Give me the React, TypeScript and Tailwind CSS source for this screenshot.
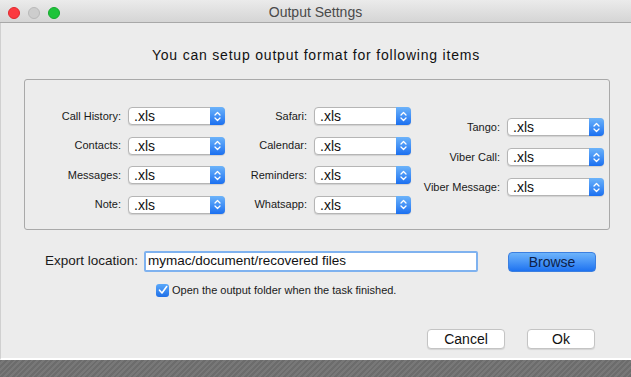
import React from "react";

const F = { fontFamily: '"Liberation Sans", Arial, sans-serif' };

function Select() {
  return (
    <div className="relative flex h-[18px] w-[97px] items-center rounded-[4px] border border-[#b5b5b5] bg-white shadow-[0_1px_1px_rgba(0,0,0,0.12)]">
      <span className="pl-[5px] text-[14px] leading-none text-[#111]">.xls</span>
      <div className="absolute right-[-1px] top-[-1px] flex h-[18px] w-[15px] items-center justify-center rounded-r-[4px] bg-gradient-to-b from-[#6cb3fa] to-[#1a6ff0]">
        <svg width="7" height="11" viewBox="0 0 7 11" fill="none" stroke="white" strokeWidth="1.3" strokeLinecap="round" strokeLinejoin="round">
          <path d="M1 4 L3.5 1.5 L6 4" />
          <path d="M1 7 L3.5 9.5 L6 7" />
        </svg>
      </div>
    </div>
  );
}

function Row({ label, lw }: { label: string; lw: string }) {
  return (
    <div className="flex h-[18px] items-center">
      <div className={`${lw} pr-[7px] text-right text-[11px] text-[#1a1a1a]`}>{label}</div>
      <Select />
    </div>
  );
}

export default function App() {
  return (
    <div className="flex h-[377px] w-[631px] flex-col overflow-hidden bg-[#ececec]" style={F}>
      <div className="relative flex h-[23px] items-center justify-center border-b border-[#a8a8a8] bg-gradient-to-b from-[#ebebeb] to-[#d5d5d5]">
        <div className="absolute left-[8px] top-[7px] flex gap-[8px]">
          <div className="h-[12px] w-[12px] rounded-full bg-[#fc3a40] border border-[#e0282e]" />
          <div className="h-[12px] w-[12px] rounded-full bg-[#cdcdcd] border border-[#b9b9b9]" />
          <div className="h-[12px] w-[12px] rounded-full bg-[#1ec43b] border border-[#14a92d]" />
        </div>
        <span className="mt-[2px] text-[14px] leading-none text-[#4a4a4a]">Output Settngs</span>
      </div>

      <div className="flex flex-1 flex-col border-b-2 border-white border-l border-l-[#d0d0d0]">
        <div className="mt-[24px] text-center text-[14px] leading-[17px] tracking-[0.8px] text-[#111]">
          You can setup output format for following items
        </div>

        <div className="ml-[23px] mt-[15px] flex h-[151px] w-[586px] rounded-[3px] border border-[#a9a9a9]">
          <div className="mt-[27px] flex flex-col gap-[11.5px]">
            <Row label="Call History:" lw="w-[103px]" />
            <Row label="Contacts:" lw="w-[103px]" />
            <Row label="Messages:" lw="w-[103px]" />
            <Row label="Note:" lw="w-[103px]" />
          </div>
          <div className="mt-[27px] flex flex-col gap-[11.5px]">
            <Row label="Safari:" lw="w-[89px]" />
            <Row label="Calendar:" lw="w-[89px]" />
            <Row label="Reminders:" lw="w-[89px]" />
            <Row label="Whatsapp:" lw="w-[89px]" />
          </div>
          <div className="ml-[1px] mt-[38px] flex flex-col gap-[12px]">
            <Row label="Tango:" lw="w-[95px]" />
            <Row label="Viber Call:" lw="w-[95px]" />
            <Row label="Viber Message:" lw="w-[95px]" />
          </div>
        </div>

        <div className="mt-[21px] flex h-[21px] items-center">
          <div className="w-[137px] text-right text-[13.5px] text-[#1a1a1a]">Export location:</div>
          <div className="ml-[6px] flex h-[21px] w-[334px] items-center rounded-[2px] border-[2px] border-[#7fb2ef] bg-white pl-[2px] text-[13.5px] text-[#111]">
            mymac/document/recovered files
          </div>
          <button className="ml-[30px] mt-[1px] h-[20px] w-[88px] rounded-[4px] border border-[#3b7fe0] bg-gradient-to-b from-[#6db4fb] to-[#1d72f0] text-[14px] leading-none text-[#0d1f4a]">
            Browse
          </button>
        </div>

        <div className="ml-[155px] mt-[10px] flex items-center">
          <div className="flex h-[13px] w-[13px] items-center justify-center rounded-[3px] bg-gradient-to-b from-[#5aa8fa] to-[#1f6fe8]">
            <svg width="10" height="10" viewBox="0 0 10 10" fill="none" stroke="white" strokeWidth="1.6" strokeLinecap="round" strokeLinejoin="round">
              <path d="M1.5 5.2 L4 8 L8.7 1.5" />
            </svg>
          </div>
          <span className="ml-[3px] text-[11px] text-[#1a1a1a]">Open the output folder when the task finished.</span>
        </div>

        <div className="mt-[30px] flex">
          <button className="ml-[426px] h-[20px] w-[78px] rounded-[4px] border border-[#c4c4c4] bg-white text-[14px] leading-none text-[#111] shadow-[0_1px_1px_rgba(0,0,0,0.1)]">
            Cancel
          </button>
          <button className="ml-[22px] h-[20px] w-[68px] rounded-[4px] border border-[#c4c4c4] bg-white text-[14px] leading-none text-[#111] shadow-[0_1px_1px_rgba(0,0,0,0.1)]">
            Ok
          </button>
        </div>
      </div>

      <div className="h-[17px] bg-[repeating-linear-gradient(135deg,#6c6c6c_0px,#6c6c6c_2px,#787878_2px,#787878_4px)]" />
    </div>
  );
}
